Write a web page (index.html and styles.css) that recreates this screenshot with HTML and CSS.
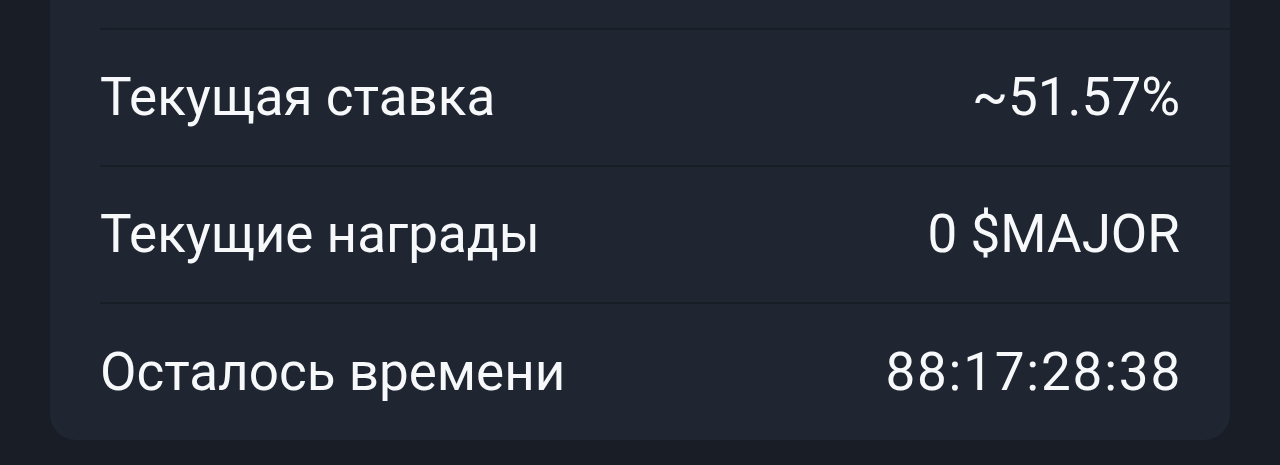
FILE: index.html
```html
<!DOCTYPE html>
<html lang="ru">
<head>
<meta charset="utf-8">
<link rel="stylesheet" href="styles.css">
</head>
<body>
<div class="page">
  <div class="card">
    <div class="row">
      <span class="label">Текущая ставка</span>
      <span class="value">~51.57%</span>
    </div>
    <div class="row">
      <span class="label">Текущие награды</span>
      <span class="value">0 $MAJOR</span>
    </div>
    <div class="row last">
      <span class="label">Осталось времени</span>
      <span class="value timer">88:17:28:38</span>
    </div>
  </div>
</div>
</body>
</html>
```
FILE: styles.css
```css
html, body {
  margin: 0;
  padding: 0;
  background: #191e26;
}
body {
  width: 1280px;
  height: 465px;
  overflow: hidden;
  font-family: Roboto, "Liberation Sans", sans-serif;
  color: #f7f8fa;
}
.page {
  padding: 0 50px 0 50px;
}
.card {
  background: #1f2531;
  border-radius: 0 0 26px 26px;
  padding-top: 28px;
  width: 1180px;
}
.row {
  display: flex;
  justify-content: space-between;
  align-items: center;
  margin-left: 50px;
  padding-right: 50px;
  height: 135px;
  border-top: 2px solid #181d26;
}
.row.last {
  height: 136px;
}
.label, .value {
  font-size: 53px;
  font-weight: 400;
  line-height: 1;
}
.timer {
  letter-spacing: 1.8px;
  margin-right: -2px;
}
```
